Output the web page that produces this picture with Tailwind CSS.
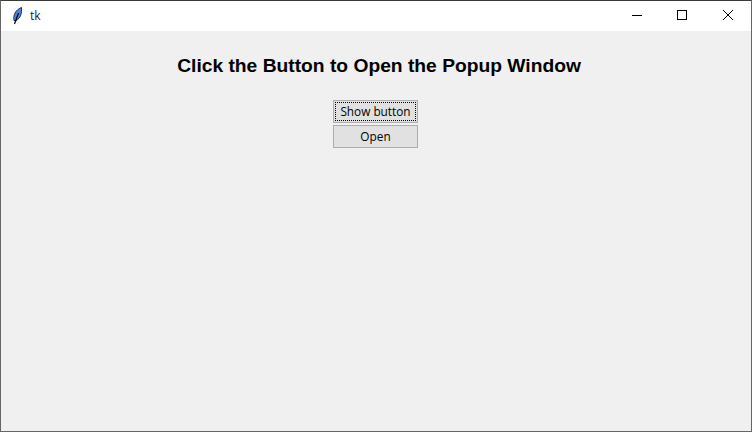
<!DOCTYPE html>
<html><head><meta charset="utf-8"><script src="https://cdn.jsdelivr.net/npm/@tailwindcss/browser@4"></script></head>
<body class="m-0 overflow-hidden">
<div class="w-[752px] h-[432px] flex flex-col bg-[#f0f0f0] border border-[#666666] border-t-[#3a3a3a] font-['Open_Sans',sans-serif] overflow-hidden">
  <div class="h-[30px] bg-white flex items-center shrink-0">
    <svg class="ml-[10px] mt-[-1px]" width="13" height="18" viewBox="0 0 13 18"><path d="M3 13.5 C2 8 4.5 3 10.5 0.5 C11 6 9.5 11.5 5 13.5 Z" fill="#4a86d8" stroke="#14284a" stroke-width="1"/><path d="M3.5 17 L7.5 6" stroke="#000" stroke-width="1.2" fill="none"/></svg>
    <span class="ml-[6px] text-[12px] text-[#0a2a3a] leading-none">tk</span>
    <div class="ml-auto flex items-center h-full">
      <svg width="46" height="30" viewBox="0 0 46 30"><path d="M19 14.5H29" stroke="#000"/></svg>
      <svg width="46" height="30" viewBox="0 0 46 30"><rect x="18.5" y="9.5" width="9" height="9" fill="none" stroke="#000"/></svg>
      <svg width="46" height="30" viewBox="0 0 46 30"><path d="M18 9L28 19M28 9L18 19" stroke="#000" fill="none"/></svg>
    </div>
  </div>
  <div class="flex flex-col items-center flex-1 bg-[#f0f0f0]">
    <h1 class="mt-[21px] ml-[6px] h-[28px] text-[19.24px] leading-[28px] font-bold text-black font-['Liberation_Sans',sans-serif] whitespace-nowrap">Click the Button to Open the Popup Window</h1>
    <div class="mt-[20px] ml-[-1px] flex flex-col gap-[2px] text-[11.8px] text-black">
      <button class="w-[85px] h-[23px] bg-[#e1e1e1] border border-[#adadad] flex items-center justify-center p-[1px]"><span class="w-full h-full border border-dotted border-black flex items-center justify-center leading-none">Show button</span></button>
      <button class="w-[85px] h-[23px] bg-[#e1e1e1] border border-[#adadad] flex items-center justify-center leading-none">Open</button>
    </div>
  </div>
</div>
</body></html>
